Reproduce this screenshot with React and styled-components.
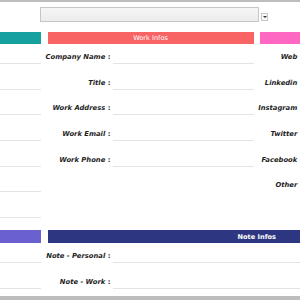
import styled, { createGlobalStyle } from 'styled-components'

const GlobalStyle = createGlobalStyle`
  html, body {
    margin: 0;
    padding: 0;
    background: #ffffff;
    overflow: hidden;
  }
  body {
    font-family: 'DejaVu Sans', 'Liberation Sans', sans-serif;
  }
`

const Sheet = styled.div`
  width: 300px;
  height: 300px;
  display: flex;
  flex-direction: column;
  border-top: 2px solid #bdbdbd;
  box-sizing: border-box;
  overflow: hidden;
`

const Toolbar = styled.div`
  height: 30px;
  display: flex;
  align-items: flex-start;
  gap: 2px;
  padding: 5px 0 0 40px;
  box-sizing: border-box;
`

const Select = styled.div`
  width: 219px;
  height: 15px;
  box-sizing: border-box;
  border: 1px solid #c6c6c6;
  background: linear-gradient(#f6f6f6, #ececec);
`

const DropButton = styled.div`
  width: 7px;
  height: 8px;
  margin-top: 6px;
  box-sizing: border-box;
  border: 1px solid #c8c8c8;
  background: #f8f8f8;
  display: flex;
  align-items: center;
  justify-content: center;
`

const Caret = styled.span`
  width: 0;
  height: 0;
  border-left: 2px solid transparent;
  border-right: 2px solid transparent;
  border-top: 2px solid #333;
`

const Grid = styled.div`
  flex: 1;
  display: grid;
  grid-template-columns: 41px 206px 206px;
  grid-template-rows: 186px auto;
  column-gap: 6.5px;
  row-gap: 12px;
  align-items: start;
`

const Section = styled.div`
  display: flex;
  flex-direction: column;
  grid-column: ${p => p.$span || 'auto'};
`

const Bar = styled.div`
  height: ${p => p.$h || 12}px;
  background: ${p => p.$color};
  color: #ffffff;
  font-size: 6.6px;
  font-weight: ${p => (p.$bold ? 'bold' : 'normal')};
  display: flex;
  align-items: center;
  justify-content: center;
  white-space: nowrap;
`

const Fields = styled.div`
  display: flex;
  flex-direction: column;
  gap: 5.67px;
`

const Row = styled.div`
  height: 20px;
  display: grid;
  grid-template-columns: ${p => (p.$label ? `${p.$label}px 1fr` : '1fr')};
  column-gap: 2px;
`

const Label = styled.div`
  display: flex;
  align-items: flex-end;
  justify-content: flex-end;
  padding-bottom: 2px;
  line-height: 10px;
  font-size: 6.8px;
  font-weight: bold;
  font-style: italic;
  color: #1f1f1f;
  white-space: nowrap;
`

const Colon = styled.span`
  margin-left: 2.5px;
  font-style: normal;
`

const Input = styled.div`
  border-bottom: 1px solid #e4e4e4;
`

const ScrollStrip = styled.div`
  height: 4px;
  background: #bdbdbd;
`

const workFields = ['Company Name', 'Title', 'Work Address', 'Work Email', 'Work Phone']
const socialFields = ['Web', 'Linkedin', 'Instagram', 'Twitter', 'Facebook', 'Other']
const noteFields = ['Note - Personal', 'Note - Work']

const FieldList = ({ fields, label, count }) => {
  const items = fields || Array.from({ length: count }, () => null)
  return (
    <Fields>
      {items.map((name, i) => (
        <Row key={i} $label={name ? label : 0}>
          {name && (
            <Label>
              {name}
              <Colon>:</Colon>
            </Label>
          )}
          <Input />
        </Row>
      ))}
    </Fields>
  )
}

const App = () => {
  return (
    <>
      <GlobalStyle />
      <Sheet>
        <Toolbar>
          <Select />
          <DropButton>
            <Caret />
          </DropButton>
        </Toolbar>
        <Grid>
          <Section>
            <Bar $color='#16a09e' />
            <FieldList count={7} />
          </Section>
          <Section>
            <Bar $color='#f86464'>Work Infos</Bar>
            <FieldList fields={workFields} label={63} />
          </Section>
          <Section>
            <Bar $color='#ff68c2' />
            <FieldList fields={socialFields} label={42.5} />
          </Section>
          <Section>
            <Bar $color='#6a60d0' $h={13} />
            <FieldList count={2} />
          </Section>
          <Section $span='2 / span 2'>
            <Bar $color='#2d3781' $h={13} $bold>Note Infos</Bar>
            <FieldList fields={noteFields} label={63} />
          </Section>
        </Grid>
        <ScrollStrip />
      </Sheet>
    </>
  )
}

export default App
